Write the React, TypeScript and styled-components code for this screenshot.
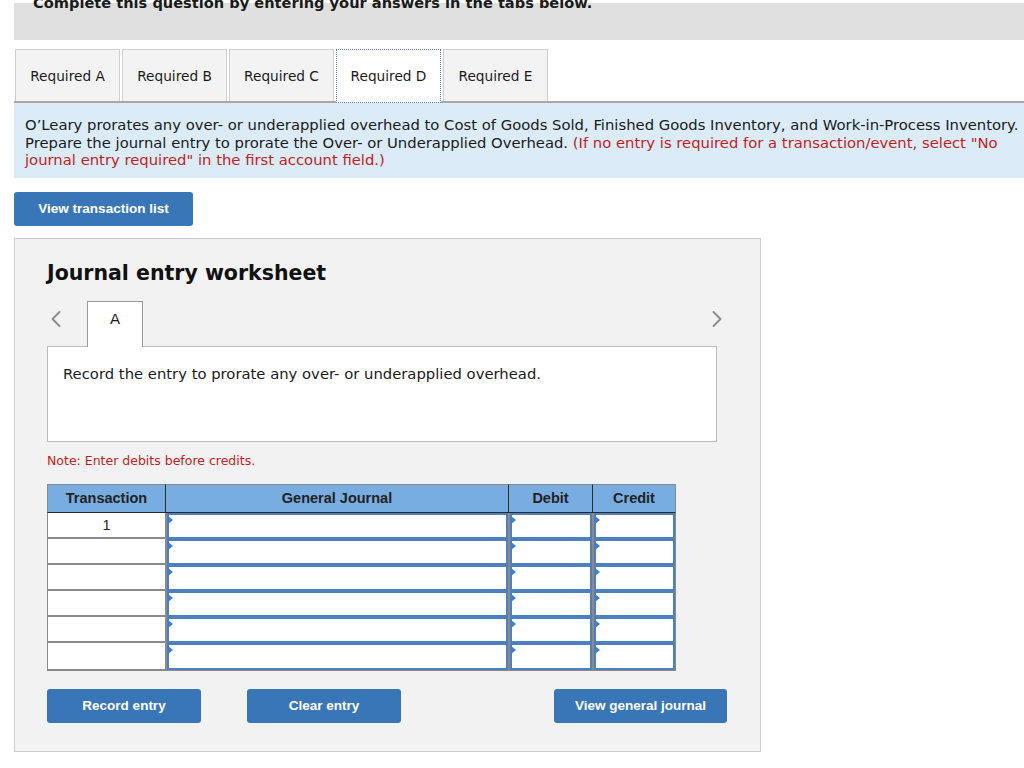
import React from 'react';
import styled, { createGlobalStyle } from 'styled-components';
import { ChevronLeft, ChevronRight } from 'lucide-react';

const GlobalStyle = createGlobalStyle`
  html, body {
    margin: 0;
    padding: 0;
    background: #ffffff;
    overflow: hidden;
  }
  body {
    font-family: "DejaVu Sans", Verdana, sans-serif;
    color: #1a1a1a;
  }
`;

const Page = styled.div`
  width: 1010px;
  padding-left: 14px;
`;

const TopBar = styled.div`
  margin-top: 3px;
  height: 37px;
  background: #e0e0e0;
  padding-left: 19px;
`;

const TopText = styled.div`
  font-size: 14.6px;
  font-weight: bold;
  line-height: 15px;
  transform: translateY(-8px);
  white-space: nowrap;
`;

const TabStrip = styled.div`
  display: flex;
  gap: 2px;
  margin-top: 9px;
  padding-left: 1px;
  border-bottom: 2px solid #a8a8a8;
  height: 52px;
`;

const Tab = styled.div<{ $active?: boolean }>`
  width: 105px;
  height: ${p => (p.$active ? '54px' : '52px')};
  box-sizing: border-box;
  display: flex;
  align-items: center;
  justify-content: center;
  font-size: 13.7px;
  background: ${p => (p.$active ? '#ffffff' : '#f3f3f3')};
  border: ${p => (p.$active ? '1px dotted #5a7fb0' : '1px solid #cfcfcf')};
  border-bottom: ${p => (p.$active ? '1px dotted #5a7fb0' : 'none')};
  position: relative;
  z-index: 1;
`;

const Instructions = styled.div`
  background: #dbecf8;
  padding: 13px 11px 9px;
  font-size: 14.8px;
  line-height: 17.5px;
  white-space: nowrap;
  overflow: hidden;
`;

const Hint = styled.span`
  color: #c21d22;
`;

const BlueButton = styled.button<{ $width: number }>`
  width: ${p => p.$width}px;
  height: 34px;
  background: #3876b8;
  color: #ffffff;
  border: none;
  border-radius: 3px;
  font-family: "Liberation Sans", Arial, sans-serif;
  font-size: 13.5px;
  font-weight: bold;
  padding: 0;
  cursor: pointer;
`;

const TopButtonRow = styled.div`
  margin-top: 14px;
  display: flex;
`;

const Worksheet = styled.div`
  margin-top: 12px;
  width: 747px;
  height: 514px;
  box-sizing: border-box;
  background: #f2f2f2;
  border: 1px solid #cccccc;
  padding: 19px 44px 0 32px;
`;

const Title = styled.h2`
  margin: 0;
  font-size: 20.5px;
  font-weight: bold;
  line-height: 30px;
  color: #111;
`;

const EntryNav = styled.div`
  margin-top: 13px;
  display: flex;
  align-items: flex-end;
  width: 670px;
  position: relative;
`;

const NavArrow = styled.span<{ $side: 'left' | 'right' }>`
  position: absolute;
  top: 4px;
  ${p => (p.$side === 'left' ? 'left: -5px;' : 'right: -14px;')}
  color: #8a8a8a;
  display: flex;
`;

const EntryTab = styled.div`
  margin-left: 40px;
  width: 56px;
  height: 46px;
  box-sizing: border-box;
  background: #ffffff;
  border: 1px solid #9a9a9a;
  border-bottom: none;
  display: flex;
  justify-content: center;
  padding-top: 8px;
  font-size: 14.8px;
  margin-bottom: -1px;
  position: relative;
  z-index: 1;
`;

const EntryBox = styled.div`
  width: 670px;
  height: 96px;
  box-sizing: border-box;
  background: #ffffff;
  border: 1px solid #bcbcbc;
  padding: 18px 15px;
  font-size: 14.8px;
  line-height: 18px;
`;

const Note = styled.div`
  margin-top: 11px;
  font-size: 12.5px;
  color: #c21d22;
`;

const Grid = styled.div`
  margin-top: 16px;
  display: grid;
  grid-template-columns: 118px 343px 84px 84px;
  width: 629px;
`;

const HeadCell = styled.div<{ $first?: boolean }>`
  height: 29px;
  box-sizing: border-box;
  background: #78ade2;
  border-top: 1px solid #8a8a8a;
  border-bottom: 1px solid #2a2a2a;
  border-left: 1px solid ${p => (p.$first ? '#8a8a8a' : '#2a2a2a')};
  display: flex;
  align-items: center;
  justify-content: center;
  font-family: "Liberation Sans", Arial, sans-serif;
  font-size: 14.5px;
  font-weight: bold;
  color: #222;
  &:nth-child(4) {
    border-right: 1px solid #8a8a8a;
  }
`;

const TransCell = styled.div<{ $last?: boolean }>`
  height: ${p => (p.$last ? '28px' : '26px')};
  box-sizing: border-box;
  background: #ffffff;
  border-left: 1px solid #8a8a8a;
  border-bottom: 2px solid #8a8a8a;
  display: flex;
  align-items: center;
  justify-content: center;
  font-family: "Liberation Sans", Arial, sans-serif;
  font-size: 14.5px;
  color: #222;
`;

const InputCell = styled.div<{ $last?: boolean; $edge?: boolean }>`
  height: ${p => (p.$last ? '28px' : '26px')};
  box-sizing: border-box;
  background: #8a8a8a;
  padding: 0 ${p => (p.$edge ? '1px' : '0')} ${p => (p.$last ? '1px' : '0')} 2px;
`;

const InputBox = styled.div`
  position: relative;
  height: 100%;
  box-sizing: border-box;
  background: #ffffff;
  border: 2px solid #4d80c0;
  &::before {
    content: '';
    position: absolute;
    top: 1px;
    left: -1px;
    border-left: 5px solid #3d7ed0;
    border-top: 4px solid transparent;
    border-bottom: 4px solid transparent;
  }
`;

const ActionRow = styled.div`
  margin-top: 18px;
  display: flex;
  gap: 46px;
  width: 680px;
  & > button:last-child {
    margin-left: auto;
  }
`;

const rows = [1, 2, 3, 4, 5, 6];

export default function App() {
  return (
    <>
      <GlobalStyle />
      <Page>
        <TopBar>
          <TopText>Complete this question by entering your answers in the tabs below.</TopText>
        </TopBar>

        <TabStrip>
          <Tab>Required A</Tab>
          <Tab>Required B</Tab>
          <Tab>Required C</Tab>
          <Tab $active>Required D</Tab>
          <Tab>Required E</Tab>
        </TabStrip>

        <Instructions>
          O’Leary prorates any over- or underapplied overhead to Cost of Goods Sold, Finished Goods Inventory, and Work-in-Process Inventory.
          <br />
          Prepare the journal entry to prorate the Over- or Underapplied Overhead.{' '}
          <Hint>(If no entry is required for a transaction/event, select "No</Hint>
          <br />
          <Hint>journal entry required" in the first account field.)</Hint>
        </Instructions>

        <TopButtonRow>
          <BlueButton $width={179}>View transaction list</BlueButton>
        </TopButtonRow>

        <Worksheet>
          <Title>Journal entry worksheet</Title>

          <EntryNav>
            <NavArrow $side="left">
              <ChevronLeft size={28} strokeWidth={1.6} />
            </NavArrow>
            <EntryTab>A</EntryTab>
            <NavArrow $side="right">
              <ChevronRight size={28} strokeWidth={1.6} />
            </NavArrow>
          </EntryNav>
          <EntryBox>Record the entry to prorate any over- or underapplied overhead.</EntryBox>

          <Note>Note: Enter debits before credits.</Note>

          <Grid>
            <HeadCell $first>Transaction</HeadCell>
            <HeadCell>General Journal</HeadCell>
            <HeadCell>Debit</HeadCell>
            <HeadCell>Credit</HeadCell>
            {rows.map(r => {
              const last = r === rows.length;
              return (
                <React.Fragment key={r}>
                  <TransCell $last={last}>{r === 1 ? '1' : ''}</TransCell>
                  <InputCell $last={last}><InputBox /></InputCell>
                  <InputCell $last={last}><InputBox /></InputCell>
                  <InputCell $last={last} $edge><InputBox /></InputCell>
                </React.Fragment>
              );
            })}
          </Grid>

          <ActionRow>
            <BlueButton $width={154}>Record entry</BlueButton>
            <BlueButton $width={154}>Clear entry</BlueButton>
            <BlueButton $width={173}>View general journal</BlueButton>
          </ActionRow>
        </Worksheet>
      </Page>
    </>
  );
}
